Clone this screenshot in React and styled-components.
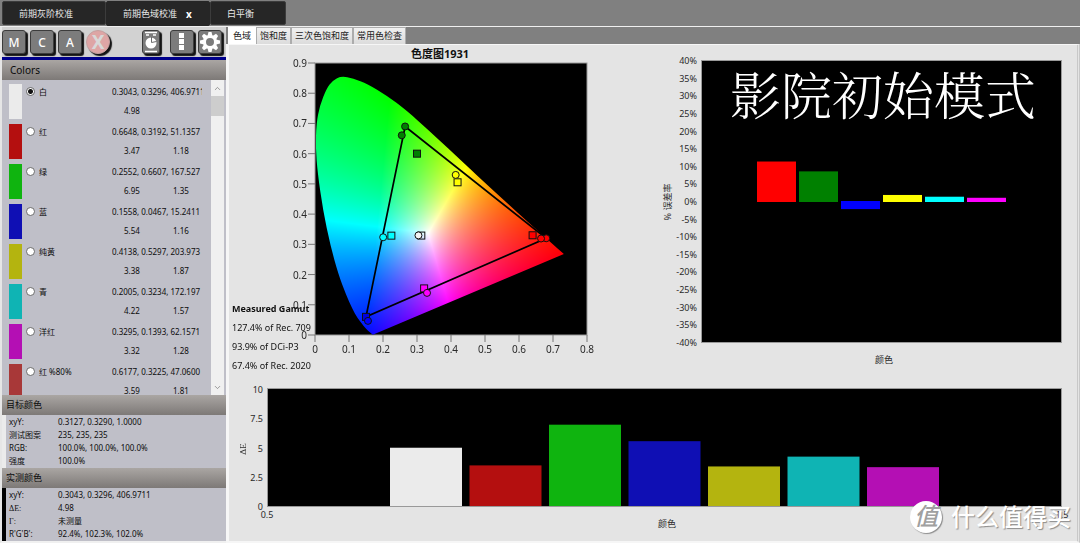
import React, { useEffect, useRef } from "react";
import styled, { createGlobalStyle } from "styled-components";
import { ChevronDown, ChevronUp } from "lucide-react";

const GlobalStyle = createGlobalStyle`
  * {
    box-sizing: border-box;
  }

  body {
    background: #808080;
    color: #0c0c0c;
    font-family: "Noto Sans", "Noto Sans CJK SC", sans-serif;
    font-size: 8px;
    margin: 0;
  }

  button, input {
    font-family: inherit;
    margin: 0;
    padding: 0;
  }
`;

const Page = styled.div`
  display: flex;
  flex-direction: column;
  height: 100vh;
  min-height: 540px;
  position: relative;
`;

const MainTabs = styled.nav`
  border-bottom: 1px solid #f0f0f0;
  display: flex;
  flex: none;
  height: 27px;
  padding: 1px 2px 0 2px;
`;

const MainTab = styled.button`
  align-items: center;
  background: #262626;
  border: 1px solid ${props => props.$active ? "#262626" : "#3c3c3c"};
  border-radius: 2px;
  color: #e6e6e6;
  display: flex;
  font-size: 9px;
  gap: 9px;
  height: ${props => props.$active ? "25px" : "24px"};
  padding: 0 0 0 16px;
  width: ${props => props.$wide ? "104px" : "76px"};

  b {
    color: #fff;
    font-size: 10px;
  }
`;

const Workspace = styled.div`
  display: grid;
  flex: 1;
  grid-template-columns: 226px minmax(0, 1fr);
  min-height: 0;
`;

const Sidebar = styled.aside`
  background: #bfbfc8;
  border-bottom: 2px solid #f0f0f0;
  border-left: 2px solid #e6e6e6;
  display: flex;
  flex-direction: column;
  min-height: 0;
`;

const Toolbar = styled.div`
  align-items: center;
  background: #d2d2d2;
  border-bottom: 3px solid #00008b;
  display: flex;
  flex: none;
  gap: 4px;
  height: 33px;
  padding: 0 4px 0 0;
`;

const ToolButton = styled.button`
  align-items: center;
  background: #7c7c7c;
  border: 1px solid #3c3c3c;
  border-radius: 3px;
  box-shadow: 2px 2px 1px #141414;
  color: #fff;
  display: flex;
  font-size: 12px;
  font-weight: 500;
  height: 24px;
  justify-content: center;
  width: ${props => props.$narrow ? "18px" : "24px"};
`;

const StopButton = styled(ToolButton)`
  background: #dea5a5;
  border-color: #c4a0a0;
  border-radius: 50%;
  color: #d8d8d8;
  font-size: 19px;
  font-weight: 700;
`;

const Spacer = styled.div`
  flex: 1;
`;

const Pair = styled.div`
  display: flex;
  gap: 4px;
  margin-left: 6px;
`;

const SectionTitle = styled.h2`
  background: linear-gradient(#aaa6a3, #7d7977);
  flex: none;
  font-size: ${props => props.$large ? "10px" : "9px"};
  font-weight: 400;
  height: 20px;
  line-height: 20px;
  margin: 0;
  padding-left: ${props => props.$large ? "8px" : "4px"};
`;

const ListPane = styled.div`
  display: flex;
  flex: 1 1 0;
  min-height: 0;
  overflow: hidden;
`;

const List = styled.ul`
  flex: 1;
  list-style: none;
  margin: 0;
  min-width: 0;
  padding: 4px 9px 0 7px;
`;

const Row = styled.li`
  column-gap: 4px;
  display: grid;
  grid-template-columns: 13px 9px 69px minmax(0, 1fr);
  height: 40px;
`;

const Swatch = styled.span`
  background: ${props => props.$color};
  height: 35px;
`;

const Radio = styled.input`
  appearance: none;
  background: ${props => props.checked ? "radial-gradient(#111 0 2px, #fff 3px)" : "#fff"};
  border: 1px solid #6c6c6c;
  border-radius: 50%;
  height: 9px;
  margin-top: 3px;
  width: 9px;
`;

const Name = styled.label`
  line-height: 16px;
`;

const Values = styled.div`
  line-height: 16px;
  overflow: hidden;
  white-space: nowrap;
`;

const Deltas = styled.div`
  display: grid;
  grid-template-columns: 49px 1fr;
  line-height: 22px;
  padding-left: 12px;
`;

const ScrollBar = styled.div`
  background: #f0f0f0;
  border-right: 2px solid #bfbfc8;
  display: flex;
  flex-direction: column;
  width: 15px;
`;

const ScrollButton = styled.button`
  align-items: center;
  background: #f0f0f0;
  border: 0;
  color: #7c7c7c;
  display: flex;
  height: 16px;
  justify-content: center;
  width: 13px;
`;

const ScrollThumb = styled.div`
  background: #cdcdcd;
  height: 20px;
  margin-bottom: auto;
  width: 13px;
`;

const Details = styled.dl`
  border-left: 4px solid ${props => props.$color};
  display: grid;
  flex: none;
  grid-auto-rows: 13px;
  grid-template-columns: 49px 1fr;
  line-height: 13px;
  margin: 0;
  padding: 0 0 1px 3px;

  dd {
    margin: 0;
  }
`;

const Greek = styled.span`
  font-family: "Liberation Serif", serif;
`;

const Content = styled.main`
  display: flex;
  flex-direction: column;
  min-width: 0;
`;

const ChartTabs = styled.nav`
  display: flex;
  flex: none;
  height: 17px;
  padding-left: 2px;
`;

const ChartTab = styled.button`
  background: ${props => props.$active ? "#fff" : "linear-gradient(#f0f0f0, #dcdcdc)"};
  border: 1px solid ${props => props.$active ? "#fff" : "#acacac"};
  border-bottom: 0;
  color: #222;
  font-size: 9px;
  line-height: 14px;
  padding: 0 ${props => props.$active ? "4px" : "3px"};
`;

const Panel = styled.div`
  background: #e4e4e4;
  border-color: #f6f6f6 #c8c8c8 #f6f6f6 #f6f6f6;
  border-style: solid double solid solid;
  border-width: 1px 3px 2px 3px;
  flex: 1;
`;

const TopCharts = styled.div`
  display: grid;
  grid-template-columns: 412fr 436fr;
`;

const Chart = styled.svg`
  display: block;
  height: auto;
  overflow: visible;
  width: 100%;
`;

const AxisText = styled.text`
  fill: #2a2a2a;
  font-size: ${props => props.$size || 9}px;
  text-anchor: ${props => props.$anchor || "middle"};
`;

const ChartTitle = styled.text`
  fill: #111;
  font-size: 11px;
  font-weight: 700;
  text-anchor: middle;
`;

const Caption = styled.text`
  fill: #fff;
  font-family: "Noto Serif CJK SC", "Noto Sans CJK SC", serif;
  font-size: 51px;
  font-weight: 300;
  text-anchor: middle;
`;

const GamutText = styled.text`
  fill: #111;
  font-size: 9px;
  font-weight: ${props => props.$bold ? 700 : 400};
`;

const Watermark = styled.div`
  align-items: center;
  bottom: 10px;
  color: #fff;
  display: flex;
  font-size: 24px;
  font-weight: 500;
  gap: 9px;
  line-height: 32px;
  position: absolute;
  right: 9px;
  text-shadow: 1px 1px 1px #8c8c8c;
`;

const WatermarkBadge = styled.span`
  background: #fff;
  border-radius: 50%;
  box-shadow: 1px 1px 1px #8c8c8c;
  color: #a0a0a0;
  font-size: 24px;
  font-style: italic;
  height: 32px;
  line-height: 30px;
  text-align: center;
  text-shadow: none;
  width: 32px;
`;

const colors = [
  { name: "白", color: "#ebebeb", xyY: "0.3043, 0.3296, 406.9711", de: 4.98 },
  { name: "红", color: "#b40f0f", xyY: "0.6648, 0.3192, 51.1357", de: 3.47, dl: "1.18" },
  { name: "绿", color: "#0fb40f", xyY: "0.2552, 0.6607, 167.527", de: 6.95, dl: "1.35" },
  { name: "蓝", color: "#0f0fb4", xyY: "0.1558, 0.0467, 15.2411", de: 5.54, dl: "1.16" },
  { name: "纯黄", color: "#b4b40f", xyY: "0.4138, 0.5297, 203.973", de: 3.38, dl: "1.87" },
  { name: "青", color: "#0fb4b4", xyY: "0.2005, 0.3234, 172.197", de: 4.22, dl: "1.57" },
  { name: "洋红", color: "#b40fb4", xyY: "0.3295, 0.1393, 62.1571", de: 3.32, dl: "1.28" },
  { name: "红 %80%", color: "#a83838", xyY: "0.6177, 0.3225, 47.0600", de: 3.59, dl: "1.81" }
];

const errors = [
  { color: "#ff0000", value: 11.5 },
  { color: "#008000", value: 8.7 },
  { color: "#0000ff", value: -2.3 },
  { color: "#ffff00", value: 2 },
  { color: "#00ffff", value: 1.5 },
  { color: "#ff00ff", value: 1.2 }
];

const targets = [
  [0.3127, 0.329, "none"],
  [0.64, 0.33, "#ff0000"],
  [0.3, 0.6, "#008000"],
  [0.15, 0.06, "#0000e0"],
  [0.4193, 0.5053, "#ffff00"],
  [0.2246, 0.3287, "#00ffff"],
  [0.3209, 0.1542, "#ff00ff"]
];

const measured = [
  [0.265, 0.69, "#008000"],
  [0.68, 0.32, "#ff0000"],
  [0.3043, 0.3296, "#f4f4f4"],
  [0.6648, 0.3192, "#ff0000"],
  [0.2552, 0.6607, "#008000"],
  [0.1558, 0.0467, "#0000ff"],
  [0.4138, 0.5297, "#ffff00"],
  [0.2005, 0.3234, "#00ffff"],
  [0.3295, 0.1393, "#ff00ff"]
];

const locus = [
  [0.17, 0.001], [0.1644, 0.006], [0.1566, 0.0137], [0.144, 0.0277],
  [0.1241, 0.0578], [0.1096, 0.0868], [0.0913, 0.1327], [0.0687, 0.2007],
  [0.0454, 0.295], [0.0235, 0.4127], [0.0075, 0.5384], [0.002, 0.62],
  [0.004, 0.7], [0.0139, 0.758], [0.0339, 0.815], [0.052, 0.842],
  [0.0776, 0.857], [0.112, 0.849], [0.155, 0.83], [0.21, 0.793],
  [0.267, 0.745], [0.34, 0.672], [0.4441, 0.562], [0.5125, 0.4906],
  [0.5752, 0.4262], [0.627, 0.3735], [0.6915, 0.3083], [0.732, 0.268]
];

const PLOT = 272;
const px = x => x * PLOT / 0.8;
const py = y => PLOT - y * PLOT / 0.9;

const RED = [0.735, 0.28];
const GREEN = [0.22, 0.78];
const BLUE = [0.15, -0.02];
const WHITE = [0.333, 0.337];

const area = (a, b, c) =>
  (b[0] - a[0]) * (c[1] - a[1]) - (c[0] - a[0]) * (b[1] - a[1]);

const mix = p => [area(GREEN, BLUE, p), area(BLUE, RED, p), area(RED, GREEN, p)];
const whiteMix = mix(WHITE);

// share of each primary at a point, scaled so the brightest channel is full
function chromaToRgb(x, y) {
  const rgb = mix([x, y]).map((v, i) => Math.max(v / whiteMix[i], 0));
  const max = Math.max(...rgb);
  return rgb.map(v => 255 * Math.pow(v / max, 0.9));
}

function Horseshoe() {
  const ref = useRef(null);

  useEffect(() => {
    const ctx = ref.current.getContext("2d");
    const image = ctx.createImageData(PLOT, PLOT);
    for (let j = 0; j < PLOT; j++) {
      for (let i = 0; i < PLOT; i++) {
        const [r, g, b] = chromaToRgb(
          (i + 0.5) * 0.8 / PLOT,
          (PLOT - j - 0.5) * 0.9 / PLOT
        );
        image.data.set([r, g, b, 255], (j * PLOT + i) * 4);
      }
    }
    ctx.putImageData(image, 0, 0);

    ctx.globalCompositeOperation = "destination-in";
    ctx.beginPath();
    ctx.moveTo(px(locus[0][0]), py(locus[0][1]));
    for (let i = 1; i < locus.length - 1; i++) {
      const [x, y] = locus[i];
      const [nx, ny] = locus[i + 1];
      ctx.quadraticCurveTo(px(x), py(y), px((x + nx) / 2), py((y + ny) / 2));
    }
    ctx.lineTo(px(0.732), py(0.268));
    ctx.closePath();
    ctx.fill();
  }, []);

  return <canvas ref={ref} width={PLOT} height={PLOT} style={{ display: "block" }} />;
}

function GamutChart() {
  return (
    <Chart viewBox="0 0 412 336">
      <ChartTitle x="211" y="13">色度图1931</ChartTitle>
      <g transform="translate(86 18)">
        <rect width={PLOT} height={PLOT} fill="#000" stroke="#999" />
        <foreignObject width={PLOT} height={PLOT}>
          <Horseshoe />
        </foreignObject>
        <path
          d={`M${px(0.265)} ${py(0.69)}L${px(0.68)} ${py(0.32)}L${px(0.15)} ${py(0.06)}Z`}
          fill="none"
          stroke="#000"
          strokeWidth="1.7"
        />
        {targets.map(([x, y, fill]) => (
          <rect key={x} x={px(x) - 3.5} y={py(y) - 3.5} width="7" height="7" fill={fill} stroke="#111" />
        ))}
        {measured.map(([x, y, fill]) => (
          <circle key={x} cx={px(x)} cy={py(y)} r="3.5" fill={fill} stroke="#111" />
        ))}
        {[0, 1, 2, 3, 4, 5, 6, 7, 8, 9].map(n => (
          <g key={n}>
            <path d={`M-7 ${py(n / 10)}H0`} stroke="#777" />
            <AxisText $size={10} $anchor="end" x="-8" y={py(n / 10) + 4}>{n ? n / 10 : 0}</AxisText>
          </g>
        ))}
        {[0, 1, 2, 3, 4, 5, 6, 7, 8].map(n => (
          <g key={n}>
            <path d={`M${px(n / 10)} ${PLOT}v7`} stroke="#777" />
            <AxisText $size={10} x={px(n / 10)} y={PLOT + 18}>{n ? n / 10 : 0}</AxisText>
          </g>
        ))}
      </g>
      <GamutText $bold x="3" y="267">Measured Gamut</GamutText>
      <GamutText x="3" y="286">127.4% of Rec. 709</GamutText>
      <GamutText x="3" y="305">93.9% of DCi-P3</GamutText>
      <GamutText x="3" y="324">67.4% of Rec. 2020</GamutText>
    </Chart>
  );
}

function ErrorChart() {
  const ticks = [];
  for (let n = 40; n >= -40; n -= 5) {
    ticks.push(n);
  }
  const zero = 156;
  const unit = 3.52;

  return (
    <Chart viewBox="0 0 436 336">
      <rect x="60.5" y="15.5" width="360" height="282" fill="#000" stroke="#999" />
      {ticks.map(n => (
        <AxisText key={n} $anchor="end" x="56" y={zero + 4 - n * unit}>{n}%</AxisText>
      ))}
      {errors.map(({ color, value }, i) => (
        <rect
          key={color}
          x={116 + i * 42}
          y={value > 0 ? zero + 1 - value * unit : zero}
          width="39"
          height={Math.abs(value) * unit}
          fill={color}
        />
      ))}
      <Caption x="242" y="70">影院初始模式</Caption>
      <AxisText x="243" y="318">颜色</AxisText>
      <AxisText transform="translate(30 157) rotate(-90)">% 误差率</AxisText>
    </Chart>
  );
}

function DeltaChart() {
  const unit = 11.7;

  return (
    <Chart viewBox="0 0 848 158">
      <rect x="38.5" y="7.5" width="794" height="118" fill="#000" stroke="#999" />
      {[0, 2.5, 5, 7.5, 10].map(n => (
        <AxisText key={n} $anchor="end" x="34" y={129 - n * unit}>{n}</AxisText>
      ))}
      {colors.slice(0, 7).map(({ color, de }, i) => (
        <rect key={color} x={161 + i * 79.5} y={125 - de * unit} width="72" height={de * unit} fill={color} />
      ))}
      <AxisText x="38" y="137">0.5</AxisText>
      <AxisText x="833" y="137">1.5</AxisText>
      <AxisText x="438" y="146">颜色</AxisText>
      <AxisText transform="translate(17 68) rotate(-90)" fontFamily="Liberation Serif, serif">ΔE</AxisText>
    </Chart>
  );
}

function MeterIcon() {
  return (
    <svg width="16" height="22" viewBox="0 0 16 22" fill="none" stroke="#fff">
      <path d="M2 1.500h12M2 20.500h12M3 4h3M10 4h3" strokeWidth="1.500" />
      <circle cx="8" cy="12" r="5.500" fill="#fff" stroke="none" />
      <path d="M8.500 6v5.500l5-1" stroke="#6c6c6c" />
    </svg>
  );
}

function DotsIcon() {
  return (
    <svg width="6" height="18" viewBox="0 0 6 18" fill="#fff">
      <path d="M0 0h5v5H0zM0 6h5v5H0zM0 12h5v5H0z" />
    </svg>
  );
}

function GearIcon() {
  return (
    <svg width="22" height="22" viewBox="0 0 22 22">
      <g fill="#fff">
        {[0, 45, 90, 135, 180, 225, 270, 315].map(angle => (
          <path key={angle} d="M8.500 5L9.500 1h3l1 4z" transform={`rotate(${angle} 11 11)`} />
        ))}
      </g>
      <circle cx="11" cy="11" r="5.500" fill="none" stroke="#fff" strokeWidth="3" />
    </svg>
  );
}

function ColorRow({ item, checked }) {
  return (
    <Row>
      <Swatch $color={item.color} />
      <Radio type="radio" name="color" id={item.name} checked={checked} readOnly />
      <Name htmlFor={item.name}>{item.name}</Name>
      <div>
        <Values>{item.xyY}</Values>
        <Deltas>
          <span>{item.de}</span>
          <span>{item.dl}</span>
        </Deltas>
      </div>
    </Row>
  );
}

function App() {
  return (
    <Page>
      <GlobalStyle />
      <MainTabs>
        <MainTab $wide>前期灰阶校准</MainTab>
        <MainTab $wide $active>前期色域校准 <b>x</b></MainTab>
        <MainTab>白平衡</MainTab>
      </MainTabs>
      <Workspace>
        <Sidebar>
          <Toolbar>
            <ToolButton>M</ToolButton>
            <ToolButton>C</ToolButton>
            <ToolButton>A</ToolButton>
            <StopButton>X</StopButton>
            <Spacer />
            <ToolButton $narrow aria-label="Meter"><MeterIcon /></ToolButton>
            <Pair>
              <ToolButton aria-label="More"><DotsIcon /></ToolButton>
              <ToolButton aria-label="Settings"><GearIcon /></ToolButton>
            </Pair>
          </Toolbar>
          <SectionTitle $large>Colors</SectionTitle>
          <ListPane>
            <List>
              {colors.map((item, i) => (
                <ColorRow key={item.name} item={item} checked={i === 0} />
              ))}
            </List>
            <ScrollBar>
              <ScrollButton aria-label="Scroll up"><ChevronUp size={9} /></ScrollButton>
              <ScrollThumb />
              <ScrollButton aria-label="Scroll down"><ChevronDown size={9} /></ScrollButton>
            </ScrollBar>
          </ListPane>
          <SectionTitle>目标颜色</SectionTitle>
          <Details $color="#ebebeb">
            <dt>xyY:</dt><dd>0.3127, 0.3290, 1.0000</dd>
            <dt>测试图案</dt><dd>235, 235, 235</dd>
            <dt>RGB:</dt><dd>100.0%, 100.0%, 100.0%</dd>
            <dt>强度</dt><dd>100.0%</dd>
          </Details>
          <SectionTitle>实测颜色</SectionTitle>
          <Details $color="#000">
            <dt>xyY:</dt><dd>0.3043, 0.3296, 406.9711</dd>
            <dt><Greek>ΔE:</Greek></dt><dd>4.98</dd>
            <dt><Greek>Γ:</Greek></dt><dd>未测量</dd>
            <dt>R'G'B':</dt><dd>92.4%, 102.3%, 102.0%</dd>
          </Details>
        </Sidebar>
        <Content>
          <ChartTabs>
            <ChartTab $active>色域</ChartTab>
            <ChartTab>饱和度</ChartTab>
            <ChartTab>三次色饱和度</ChartTab>
            <ChartTab>常用色检查</ChartTab>
          </ChartTabs>
          <Panel>
            <TopCharts>
              <GamutChart />
              <ErrorChart />
            </TopCharts>
            <DeltaChart />
          </Panel>
        </Content>
      </Workspace>
      <Watermark>
        <WatermarkBadge>值</WatermarkBadge>
        什么值得买
      </Watermark>
    </Page>
  );
}

export default App;
